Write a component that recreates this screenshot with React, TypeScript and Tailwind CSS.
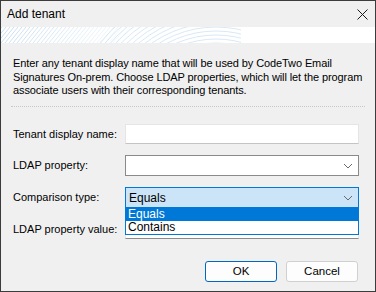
import React from 'react';

const font = { fontFamily: '"Liberation Sans", Arial, sans-serif' };

function Chevron() {
  return (
    <svg width="10" height="6" viewBox="0 0 10 6" className="shrink-0">
      <path d="M1 1 L5 5 L9 1" fill="none" stroke="#6a6a6a" strokeWidth="1" />
    </svg>
  );
}

// faint diagonal hatching that turns into concentric arcs, fading to white
function HeaderPattern() {
  const lines = [];
  for (let i = -16; i < 120; i += 4) {
    lines.push(
      <line key={i} x1={i} y1={16} x2={i + 13} y2={0} stroke="#bcd7ec" strokeWidth="0.8" strokeOpacity={Math.max(0.15, 1 - i / 140)} />
    );
  }
  const arcs = [];
  for (let r = 92; r < 150; r += 4) {
    arcs.push(<circle key={r} cx={215} cy={108} r={r} fill="none" stroke="#cfe2f2" strokeWidth="0.8" />);
  }
  return (
    <svg width="374" height="16" viewBox="0 0 374 16" className="block">
      <defs>
        <linearGradient id="hdrfade" gradientUnits="userSpaceOnUse" x1="60" y1="0" x2="240" y2="0">
          <stop offset="0" stopColor="#fff" stopOpacity="1" />
          <stop offset="0.25" stopColor="#fff" stopOpacity="0" />
          <stop offset="0.7" stopColor="#fff" stopOpacity="0" />
          <stop offset="1" stopColor="#fff" stopOpacity="1" />
        </linearGradient>
        <clipPath id="hdrclip">
          <rect x="0" y="0" width="240" height="16" />
        </clipPath>
      </defs>
      <g clipPath="url(#hdrclip)">
        <g>{lines}</g>
        <g>{arcs}</g>
      </g>
      <rect x="100" y="0" width="140" height="16" fill="url(#hdrfade)" opacity="0" />
    </svg>
  );
}

export default function App() {
  return (
    <div className="w-[376px] h-[292px] bg-[#f0f0f0] border border-[#3c3c3c] flex flex-col text-[11px] text-black" style={font}>
      {/* Title bar */}
      <div className="h-[26px] shrink-0 flex items-center justify-between pl-[6px] pr-[7px] bg-[#f0f0f0]">
        <span className="text-[12px]">Add tenant</span>
        <svg width="11" height="11" viewBox="0 0 11 11">
          <path d="M0.5 0.5 L10.5 10.5 M10.5 0.5 L0.5 10.5" stroke="#1a1a1a" strokeWidth="1" />
        </svg>
      </div>

      {/* Header band */}
      <div className="h-[16px] shrink-0 bg-white">
        <HeaderPattern />
      </div>

      {/* Description */}
      <div className="h-[63px] shrink-0 pl-[12px] pr-[6px] pt-[14px]">
        <p className="leading-[13.5px] text-[11px] tracking-[-0.1px]">
          Enter any tenant display name that will be used by CodeTwo Email Signatures On-prem. Choose LDAP properties, which will let the program associate users with their corresponding tenants.
        </p>
      </div>

      <div className="mx-[10px] shrink-0 border-t border-dotted border-[#c8c8c8]" />

      {/* Form */}
      <div className="flex flex-col gap-[11px] pl-[12px] pr-[16px] pt-[17px]">
        <div className="flex items-center">
          <span className="w-[112px] shrink-0 whitespace-nowrap">Tenant display name:</span>
          <div className="flex-1 h-[20px] bg-white border border-[#e5e5e5] border-b-[#c4c4c4]" />
        </div>
        <div className="flex items-center">
          <span className="w-[112px] shrink-0 whitespace-nowrap">LDAP property:</span>
          <div className="flex-1 h-[21px] bg-white border border-[#8a8a8a] flex items-center justify-end pr-[5px]">
            <Chevron />
          </div>
        </div>
        <div className="flex items-center">
          <span className="w-[112px] shrink-0 whitespace-nowrap">Comparison type:</span>
          <div className="relative flex-1 h-[21px] bg-[#cce4f7] border border-[#0078d7] flex items-center justify-between pl-[3px] pr-[5px]">
            <span className="text-[12px]">Equals</span>
            <Chevron />
            <div className="absolute left-[-1px] right-[-1px] top-[19px] z-10 bg-white border border-[#0078d7] flex flex-col text-[12px]">
              <span className="h-[13px] leading-[13px] bg-[#0078d7] text-white pl-[2px]">Equals</span>
              <span className="h-[13px] leading-[13px] pl-[2px]">Contains</span>
            </div>
          </div>
        </div>
        <div className="flex items-center">
          <span className="w-[112px] shrink-0 whitespace-nowrap">LDAP property value:</span>
          <div className="flex-1 h-[20px] bg-white border border-[#e5e5e5] border-b-[#8a8a8a]" />
        </div>
      </div>

      {/* Buttons */}
      <div className="flex justify-end gap-[9px] pr-[17px] mt-auto mb-[9px]">
        <button className="w-[72px] h-[21px] rounded-[3px] bg-[#fdfdfd] border border-[#0067c0] text-[11.5px]">OK</button>
        <button className="w-[72px] h-[21px] rounded-[3px] bg-[#fdfdfd] border border-[#d0d0d0] text-[11.5px]">Cancel</button>
      </div>
    </div>
  );
}
